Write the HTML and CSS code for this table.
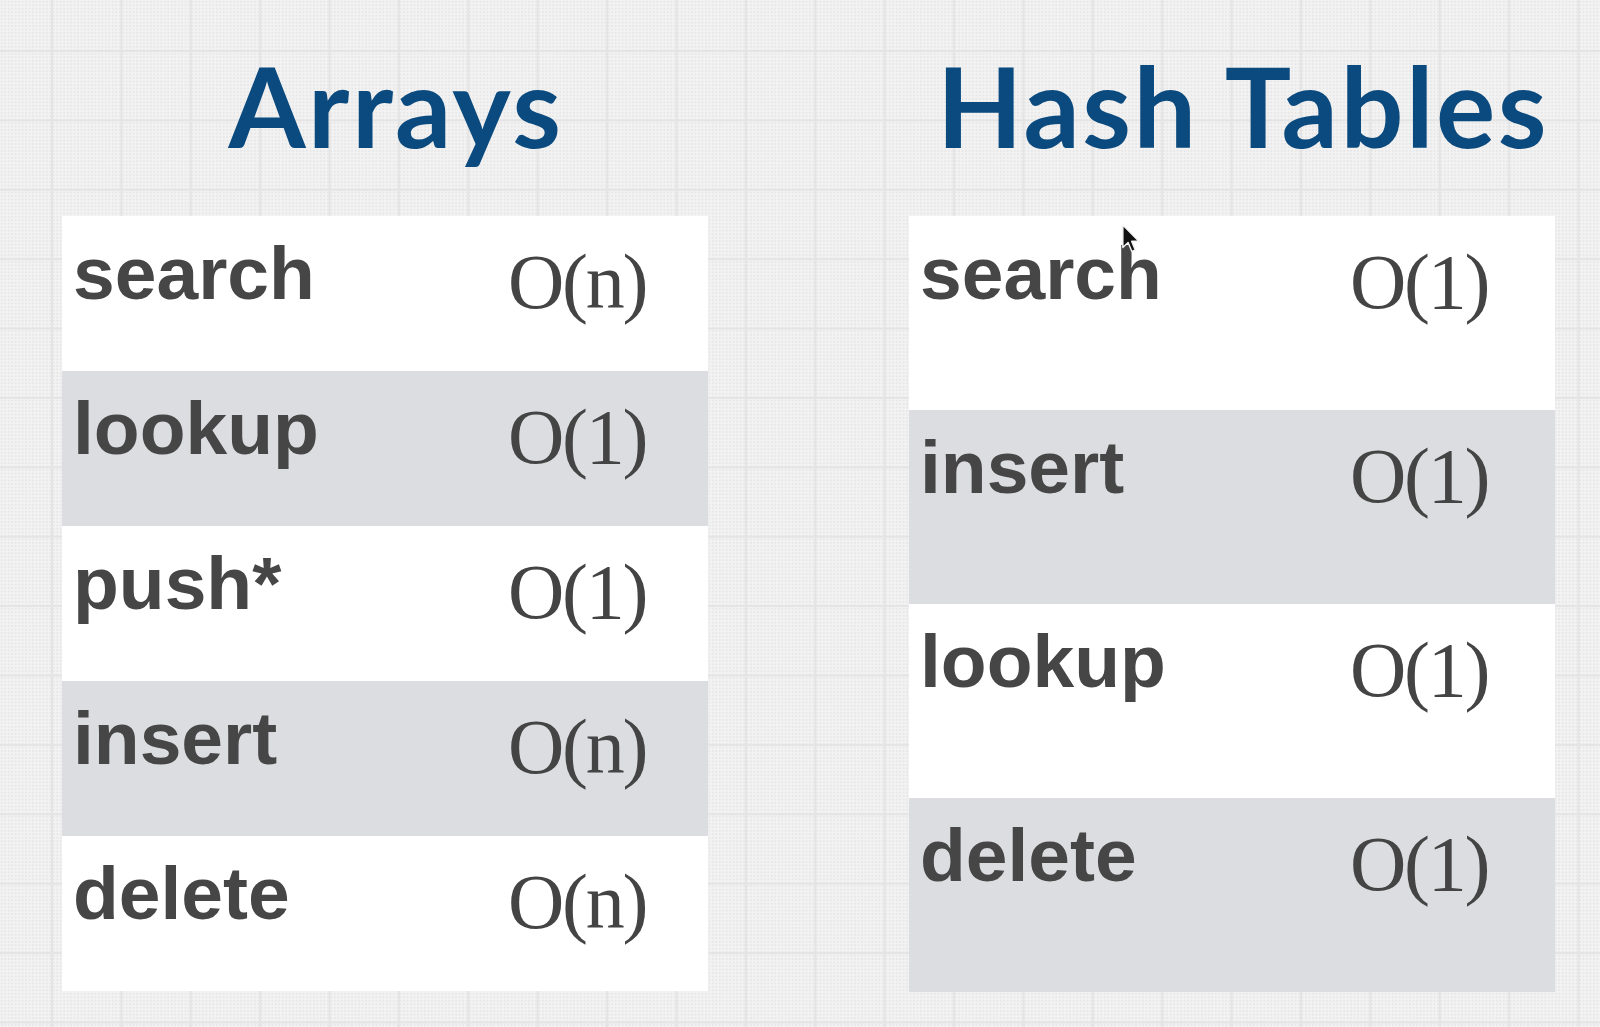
FILE: index.html
```html
<!DOCTYPE html>
<html lang="en">
<head>
<meta charset="utf-8">
<title>Arrays vs Hash Tables</title>
<link rel="stylesheet" href="styles.css">
</head>
<body>
<main class="page">
  <section class="col col-arrays">
    <h1 class="title">Arrays</h1>
    <div class="table table-arrays">
      <div class="row"><span class="op">search</span><span class="cx">O(n)</span></div>
      <div class="row alt"><span class="op">lookup</span><span class="cx">O(1)</span></div>
      <div class="row"><span class="op">push*</span><span class="cx">O(1)</span></div>
      <div class="row alt"><span class="op">insert</span><span class="cx">O(n)</span></div>
      <div class="row"><span class="op">delete</span><span class="cx">O(n)</span></div>
    </div>
  </section>
  <section class="col col-hash">
    <h1 class="title">Hash Tables</h1>
    <div class="table table-hash">
      <div class="row"><span class="op">search</span><span class="cx">O(1)</span></div>
      <div class="row alt"><span class="op">insert</span><span class="cx">O(1)</span></div>
      <div class="row"><span class="op">lookup</span><span class="cx">O(1)</span></div>
      <div class="row alt"><span class="op">delete</span><span class="cx">O(1)</span></div>
    </div>
  </section>
</main>
<svg class="cursor" width="22" height="32" viewBox="0 0 18 26" aria-hidden="true">
  <path d="M1.5 1.5 L1.5 20 L5.8 15.9 L8.9 23.2 L11.7 22 L8.7 14.9 L14.6 14.9 Z" fill="#111" stroke="#f4f4f4" stroke-width="1.2" stroke-linejoin="round"/>
</svg>
</body>
</html>
```

FILE: styles.css
```css
html, body {
  margin: 0;
  padding: 0;
}

body {
  width: 1600px;
  height: 1027px;
  overflow: hidden;
  position: relative;
  background-color: #f2f2f2;
  background-image:
    linear-gradient(#e4e4e4 2px, transparent 2px),
    linear-gradient(90deg, #e4e4e4 2px, transparent 2px),
    radial-gradient(circle, #e6e6e6 0.9px, transparent 1.2px);
  background-size: 69.4px 69.4px, 69.4px 69.4px, 3.47px 3.47px;
  background-position: 51px 50px, 51px 50px, 0 0;
}

.page {
  display: flex;
  gap: 201px;
  padding-left: 62px;
}

.col {
  width: 646px;
  display: flex;
  flex-direction: column;
}

.title {
  margin: 0;
  height: 216px;
  box-sizing: border-box;
  padding-top: 50px;
  padding-left: 22px;
  text-align: center;
  font-family: "Lato", "Open Sans", sans-serif;
  font-weight: 700;
  font-size: 111px;
  line-height: 1;
  color: #0b4a7e;
  letter-spacing: 2.5px;
}

.table {
  display: flex;
  flex-direction: column;
  background: #ffffff;
}

.row {
  display: grid;
  grid-template-columns: 446px 1fr;
  background: #ffffff;
}

.table-arrays .row { height: 155px; }
.table-hash .row { height: 194px; grid-template-columns: 441px 1fr; }

.row.alt {
  background: #dcdde0;
}

.op {
  padding-left: 11px;
  padding-top: 20px;
  font-family: "Liberation Sans", Arial, sans-serif;
  font-weight: 700;
  font-size: 75px;
  line-height: 1;
  color: #464646;
  letter-spacing: 0;
}

.cx {
  padding-top: 27px;
  font-family: "Liberation Serif", "Times New Roman", serif;
  font-weight: 400;
  font-size: 78px;
  line-height: 1;
  color: #444444;
  letter-spacing: -2.3px;
}

.cursor {
  position: absolute;
  left: 1121px;
  top: 223px;
}
```
